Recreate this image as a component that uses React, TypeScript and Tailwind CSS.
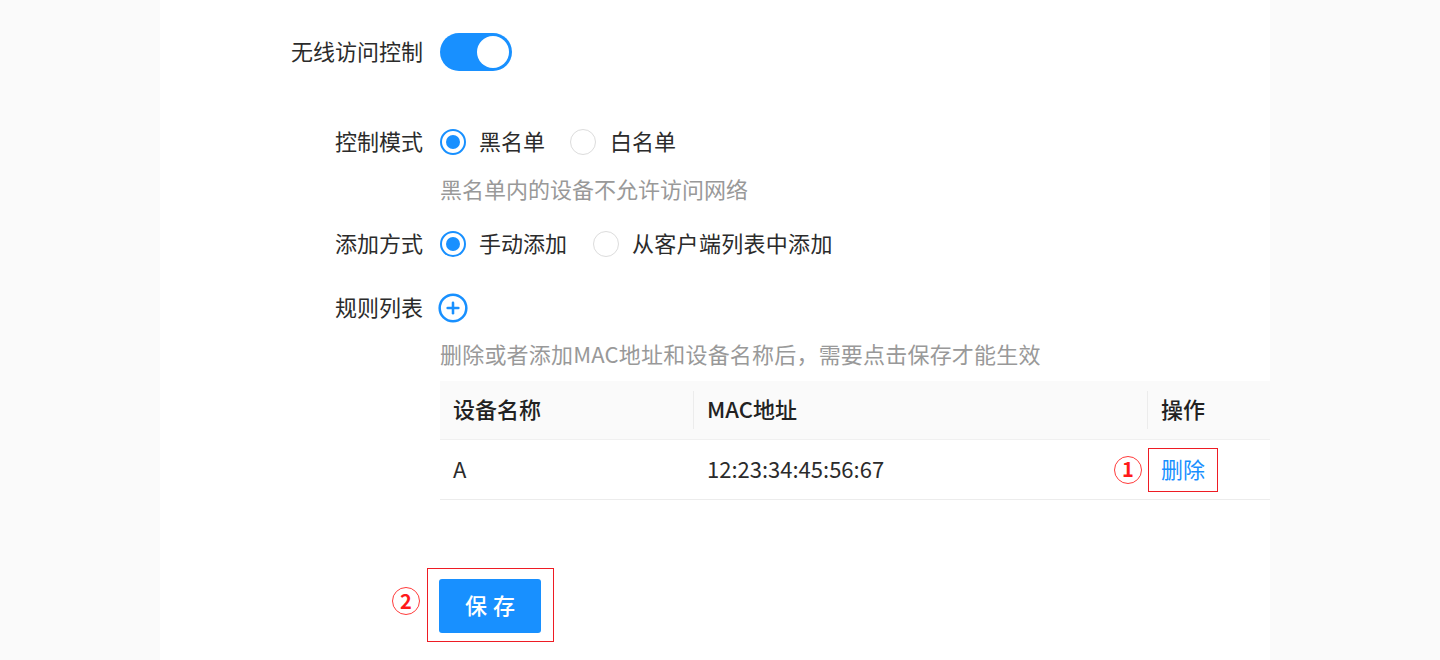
import React from 'react';
import { CirclePlus } from 'lucide-react';

const Radio: React.FC<{ checked?: boolean; className?: string }> = ({ checked, className = '' }) =>
  checked ? (
    <span className={`w-[26px] h-[26px] rounded-full border-2 border-[#1890ff] flex items-center justify-center shrink-0 ${className}`}>
      <span className="w-[14px] h-[14px] rounded-full bg-[#1890ff]" />
    </span>
  ) : (
    <span className={`block w-[26px] h-[26px] rounded-full border-[1.5px] border-[#dcdcdc] bg-white shrink-0 ${className}`} />
  );

const Mark: React.FC<{ n: string }> = ({ n }) => (
  <span className="w-[28px] h-[28px] rounded-full border border-[#ff3b3b] flex items-center justify-center text-[20px] leading-none font-semibold text-[#ff1a1a] pb-[1px]">
    {n}
  </span>
);

const Row: React.FC<{ label?: string; className?: string; children: React.ReactNode }> = ({ label, className = '', children }) => (
  <div className={`flex items-center ${className}`}>
    <div className="w-[263px] shrink-0 text-right text-[#2b2b2b] leading-none pb-[5px]">{label}</div>
    <div className="ml-[17px] flex-1 flex items-center">{children}</div>
  </div>
);

const App: React.FC = () => {
  return (
    <div className="h-[660px] overflow-hidden bg-[#fafafa] font-['Noto_Sans_CJK_SC',sans-serif] text-[22px]">
      <div className="ml-[160px] w-[1110px] h-full bg-white pt-[33px]">
        {/* 开关 */}
        <Row label="无线访问控制" className="h-[38px]">
          <button className="w-[72px] h-[38px] rounded-full bg-[#1890ff] flex items-center justify-end p-[3px]">
            <span className="w-[32px] h-[32px] rounded-full bg-white" />
          </button>
        </Row>

        {/* 控制模式 */}
        <Row label="控制模式" className="h-[28px] mt-[57px]">
          <Radio checked />
          <span className="ml-[13px] text-[#2b2b2b] leading-none pb-[4px]">黑名单</span>
          <Radio className="ml-[25px]" />
          <span className="ml-[14px] text-[#2b2b2b] leading-none pb-[4px]">白名单</span>
        </Row>
        <Row className="h-[30px] mt-[19px]">
          <span className="text-[#999] leading-none pb-[4px]">黑名单内的设备不允许访问网络</span>
        </Row>

        {/* 添加方式 */}
        <Row label="添加方式" className="h-[28px] mt-[25px]">
          <Radio checked />
          <span className="ml-[13px] text-[#2b2b2b] leading-none pb-[4px]">手动添加</span>
          <Radio className="ml-[26px]" />
          <span className="ml-[13px] text-[#2b2b2b] leading-none pb-[4px] tracking-[0.3px]">从客户端列表中添加</span>
        </Row>

        {/* 规则列表 */}
        <Row label="规则列表" className="h-[30px] mt-[35px]">
          <CirclePlus size={32} strokeWidth={1.9} className="text-[#1890ff] -ml-[3px]" />
        </Row>
        <Row className="h-[30px] mt-[17px]">
          <span className="text-[#999] leading-none pb-[4px] tracking-[0.2px]">删除或者添加MAC地址和设备名称后，需要点击保存才能生效</span>
        </Row>

        <div className="ml-[280px] mt-[11px]">
          <div className="flex items-center h-[59px] bg-[#fafafa] border-b border-[#f0f0f0] text-[#222] font-medium">
            <div className="w-[253px] pl-[13px] leading-none pb-[4px]">设备名称</div>
            <div className="w-px h-[38px] bg-[#ececec]" />
            <div className="w-[453px] pl-[13px] leading-none pb-[4px]">MAC地址</div>
            <div className="w-px h-[38px] bg-[#ececec]" />
            <div className="flex-1 pl-[13px] leading-none pb-[4px]">操作</div>
          </div>
          <div className="flex items-center h-[60px] border-b border-[#ececec] text-[#2b2b2b]">
            <div className="w-[254px] pl-[13px] leading-none pb-[4px]">A</div>
            <div className="w-[454px] pl-[13px] leading-none pb-[4px]">12:23:34:45:56:67</div>
            <div className="flex-1 flex items-center">
              <span className="relative flex items-center h-[44px] px-[12px] border-[1.5px] border-[#ee1c24]">
                <span className="absolute right-full mr-[7px] top-1/2 -translate-y-1/2">
                  <Mark n="1" />
                </span>
                <span className="text-[#1890ff] leading-none pb-[4px]">删除</span>
              </span>
            </div>
          </div>
        </div>

        {/* 保存 */}
        <div className="ml-[279px] mt-[79px] relative w-[102px]">
          <button className="w-[102px] h-[54px] rounded-[3px] bg-[#1890ff] text-white text-[22px] font-medium tracking-[6px] pl-[6px] leading-none pb-[4px]">
            保存
          </button>
          <span className="absolute -left-[12px] -top-[11px] -right-[13px] -bottom-[9px] border-[1.5px] border-[#ee1c24]" />
          <span className="absolute right-full mr-[19px] top-[8px]">
            <Mark n="2" />
          </span>
        </div>
      </div>
    </div>
  );
};

export default App;
